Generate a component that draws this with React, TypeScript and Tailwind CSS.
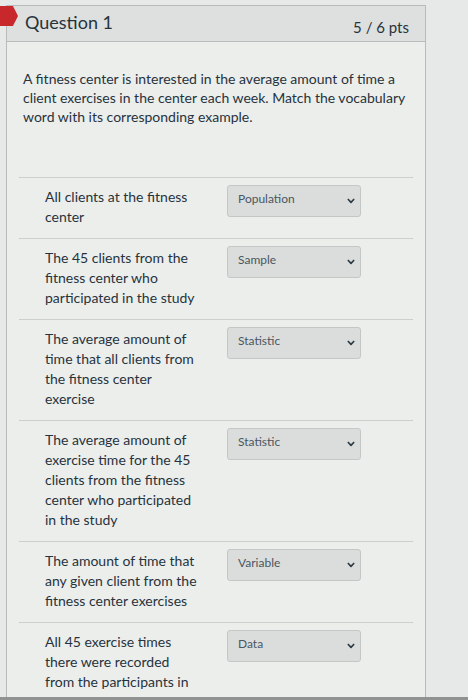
const rows: { text: string; answer: string }[] = [
  { text: "All clients at the fitness center", answer: "Population" },
  { text: "The 45 clients from the fitness center who participated in the study", answer: "Sample" },
  { text: "The average amount of time that all clients from the fitness center exercise", answer: "Statistic" },
  { text: "The average amount of exercise time for the 45 clients from the fitness center who participated in the study", answer: "Statistic" },
  { text: "The amount of time that any given client from the fitness center exercises", answer: "Variable" },
  { text: "All 45 exercise times there were recorded from the participants in the study", answer: "Data" },
];

function Chevron() {
  return (
    <svg width="8" height="6" viewBox="0 0 8 6" className="shrink-0">
      <path d="M1.3 1.5 L4 4.3 L6.7 1.5" fill="none" stroke="#2d3b45" strokeWidth="1.7" strokeLinecap="round" strokeLinejoin="round" />
    </svg>
  );
}

export default function App() {
  return (
    <div
      className="relative h-[700px] w-[468px] overflow-hidden bg-[#e6e9e7] text-[#27333c]"
      style={{ fontFamily: "Lato, 'Open Sans', sans-serif" }}
    >
      <div className="absolute left-0 top-[6px] h-[20px] w-[18px] bg-[#c8282b] [clip-path:polygon(0_0,72%_0,100%_50%,72%_100%,0_100%)]" />
      <div className="ml-[6px] mt-[5px] w-[420px] border border-b-0 border-[#b7bbb9] bg-[#eceeec]">
        <div className="flex h-[36px] items-center justify-between border-b border-[#b7bbb9] bg-[#dde0de] pl-[18px] pr-[16px]">
          <span className="mt-[-4px] text-[18px] leading-none">Question 1</span>
          <span className="mt-[8px] text-[15px] leading-none">5 / 6 pts</span>
        </div>
        <p className="mt-[27px] w-[400px] pl-[16px] text-[14px] leading-[19px]">
          A fitness center is interested in the average amount of time a client exercises in the
          center each week. Match the vocabulary word with its corresponding example.
        </p>
        <div className="mx-[12px] mt-[51px]">
          {rows.map((r, i) => (
            <div key={i} className="flex border-t border-[#cbd0ce] pt-[9px] pb-[11px]">
              <div className="w-[152px] pl-[26px] text-[14px] leading-[20px] box-content">{r.text}</div>
              <div className="ml-[30px] mt-[-2px] flex h-[32px] w-[134px] items-center justify-between rounded-[3px] border border-[#c3c7c5] bg-[#dadddb] pl-[10px] pr-[5px]">
                <span className="mt-[-4px] text-[12px] text-[#4b5661]">{r.answer}</span>
                <Chevron />
              </div>
            </div>
          ))}
        </div>
      </div>
      <div className="absolute bottom-0 left-0 h-[3px] w-full bg-[#8f9291]" />
    </div>
  );
}
